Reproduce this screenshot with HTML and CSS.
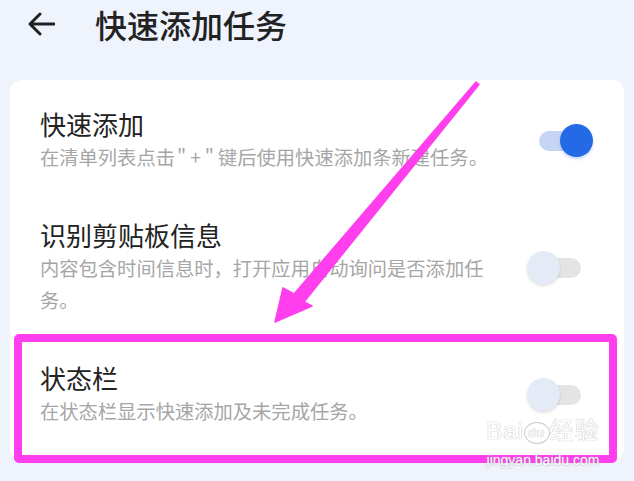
FILE: index.html
```html
<!DOCTYPE html>
<html lang="zh-CN">
<head>
    <meta charset="UTF-8">
    <meta name="viewport" content="width=device-width, initial-scale=1.0">
    <title>快速添加任务</title>
    <link rel="stylesheet" href="styles.css">
</head>
<body>

    <div class="header">
        <svg class="back" width="28" height="24" viewBox="0 0 28 24">
            <path d="M27 12 H3 M13 2 L3 12 L13 22" fill="none" stroke="#222" stroke-width="3" stroke-linecap="round" stroke-linejoin="round"/>
        </svg>
        <h1>快速添加任务</h1>
    </div>

    <div class="card">
        <div class="row">
            <div class="text">
                <div class="title">快速添加</div>
                <div class="desc">在清单列表点击<span class="quote">"+"</span>键后使用快速添加条新建任务。</div>
            </div>
            <div class="switch on"><span class="track"></span><span class="thumb"></span></div>
        </div>
        <div class="row">
            <div class="text">
                <div class="title">识别剪贴板信息</div>
                <div class="desc">内容包含时间信息时，打开应用自动询问是否添加任<br>务。</div>
            </div>
            <div class="switch"><span class="track"></span><span class="thumb"></span></div>
        </div>
        <div class="row">
            <div class="text">
                <div class="title">状态栏</div>
                <div class="desc">在状态栏显示快速添加及未完成任务。</div>
            </div>
            <div class="switch"><span class="track"></span><span class="thumb"></span></div>
        </div>
    </div>

    <!-- annotation overlay -->
    <div class="mark-box"></div>
    <svg class="pointer" width="634" height="481" viewBox="0 0 634 481">
        <polygon points="476,82 479,84.5 304,302 312,306 275,322 283,288 294,294" fill="#ff3fee" stroke="#ff3fee" stroke-width="1.5" stroke-linejoin="round"/>
    </svg>

    <div class="watermark">
        <div class="wm-logo">Bai<span class="paw">du</span>经验</div>
        <div class="wm-url">jingyan.baidu.com</div>
    </div>

</body>
</html>
```

FILE: styles.css
```css
body {
    margin: 0;
    padding: 0 10px;
    background: #eef3fc;
    font-family: "Noto Sans CJK SC", "Noto Sans", sans-serif;
    color: #222;
    height: 481px;
    overflow: hidden;
    position: relative;
}
.header {
    display: flex;
    align-items: center;
    height: 48px;
    margin-bottom: 32px;
    padding-left: 17px;
}
.back {
    margin-right: 40px;
}
.header h1 {
    margin: 0;
    font-size: 32px;
    font-weight: 500;
    color: #222;
}
.card {
    background: #fff;
    border-radius: 12px;
    padding: 5px 31px 10px 30px;
}
.row {
    display: flex;
    align-items: center;
    gap: 12px;
    padding: 23px 0;
}
.text {
    flex: 1;
}
.title {
    font-size: 26px;
    line-height: 32px;
}
.desc {
    font-size: 19.3px;
    line-height: 32px;
    color: #a6a6a6;
    margin-top: 1px;
}
.quote {
    letter-spacing: 4px;
    padding-left: 2px;
}
.switch {
    position: relative;
    width: 66px;
    height: 34px;
    flex-shrink: 0;
}
.track {
    position: absolute;
    left: 12px;
    right: 12px;
    top: 7px;
    height: 20px;
    border-radius: 10px;
    background: #e4e4e4;
}
.thumb {
    position: absolute;
    top: 0;
    left: 0;
    width: 33px;
    height: 33px;
    border-radius: 50%;
    background: #e5ebf6;
    box-shadow: 0 2px 3px rgba(0, 0, 0, 0.12);
}
.switch.on .track {
    background: #c6d5f4;
}
.switch.on .thumb {
    left: auto;
    right: 0;
    background: #2469e6;
    box-shadow: 0 2px 3px rgba(36, 105, 230, 0.25);
}
/* annotation */
.mark-box {
    position: absolute;
    left: 14px;
    top: 334px;
    width: 587px;
    height: 113px;
    border: 8px solid #ff3fee;
    border-radius: 5px;
}
.pointer {
    position: absolute;
    left: 0;
    top: 0;
}
.watermark {
    position: absolute;
    left: 484px;
    top: 416px;
    width: 118px;
    text-align: center;
    color: #fff;
}
.wm-logo {
    font-family: "Liberation Sans", "Noto Sans CJK SC", sans-serif;
    font-size: 24px;
    line-height: 30px;
    letter-spacing: 1px;
    color: #fff;
    text-shadow: 0 0 1px #bbb, 0 0 1px #bbb;
}
.paw {
    display: inline-block;
    font-size: 13px;
    line-height: 20px;
    width: 24px;
    border-radius: 50%;
    border: 1.5px solid #ccc;
    color: #fff;
    vertical-align: 2px;
}
.wm-url {
    font-family: "Liberation Sans", sans-serif;
    font-size: 14px;
    line-height: 16px;
    margin-top: 6px;
    text-shadow: 0 0 2px #999;
}
```
